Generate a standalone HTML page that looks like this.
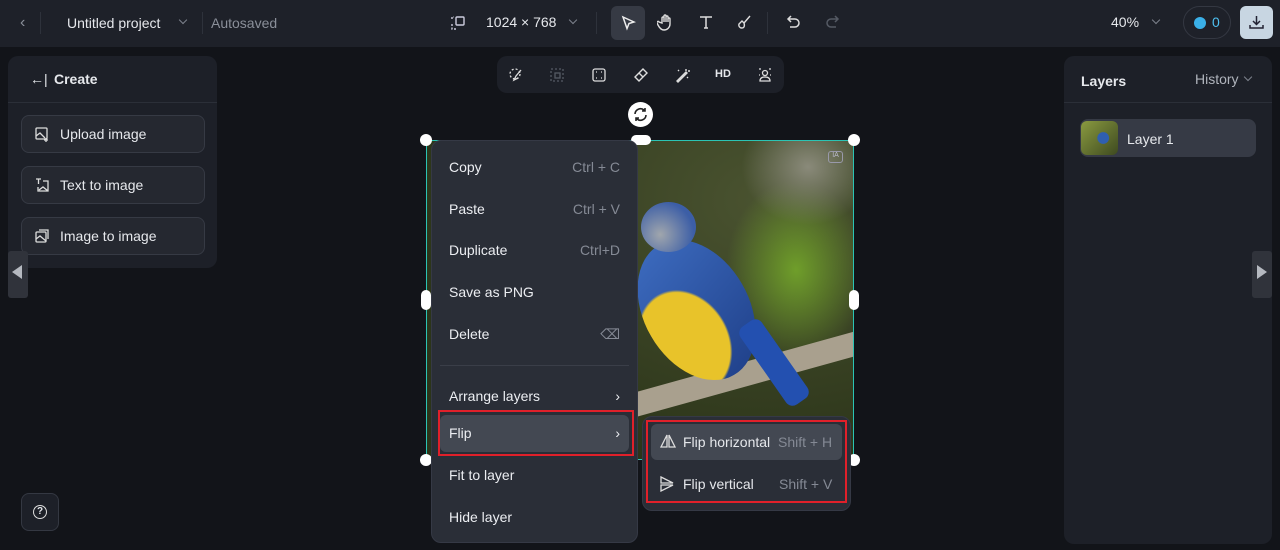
<!DOCTYPE html>
<html><head><meta charset="utf-8"><style>
*{box-sizing:border-box;margin:0;padding:0}
body{width:1280px;height:550px;background:#121419;font-family:"Liberation Sans",sans-serif;color:#e6e8ec;position:relative;overflow:hidden;font-size:14px}
.abs{position:absolute}
.top{left:0;top:0;width:1280px;height:47px;background:#1e2129}
.panel{background:#1d2028;border-radius:10px}
.btn{position:absolute;left:21px;width:184px;height:38px;border:1px solid #363a44;border-radius:8px;background:#252830;display:flex;align-items:center;padding-left:12px;gap:10px;font-size:14px}
.menu{left:431px;top:140px;width:207px;height:403px;background:#2a2e37;border-radius:10px;border:1px solid #353945}
.mi{position:absolute;left:17px;right:17px;font-size:14px;display:flex;justify-content:space-between;color:#eceef2}
.mi span.k{color:#858a95}
svg{display:block}
.chev{width:6px;height:6px;border-right:1.3px solid #7d828c;border-bottom:1.3px solid #7d828c;transform:rotate(45deg)}
</style></head><body>
<div class="abs top"></div>
<div class="abs" style="left:20px;top:14px;color:#8a8f99;font-size:16px">&#8249;</div>
<div class="abs" style="left:40px;top:12px;width:1px;height:22px;background:#2e323b"></div>
<div class="abs" style="left:67px;top:15px;font-size:14px">Untitled project</div>
<div class="abs chev" style="left:180px;top:17px"></div>
<div class="abs" style="left:202px;top:12px;width:1px;height:22px;background:#2e323b"></div>
<div class="abs" style="left:211px;top:15px;font-size:14px;color:#8a8f99">Autosaved</div>
<svg class="abs" style="left:450px;top:15px" width="16" height="16" fill="none" stroke="#ccd" stroke-width="1.4"><rect x="6" y="2" width="8" height="8" rx="1"/><path d="M2 4v-2h2M2 9v5h5" stroke-dasharray="2 1.5"/></svg>
<div class="abs" style="left:486px;top:14px;font-size:14px">1024 × 768</div>
<div class="abs chev" style="left:570px;top:17px"></div>
<div class="abs" style="left:596px;top:12px;width:1px;height:22px;background:#2e323b"></div>
<div class="abs" style="left:611px;top:6px;width:34px;height:34px;border-radius:6px;background:#363a44"></div>
<svg class="abs" style="left:620px;top:15px" width="16" height="16" fill="none" stroke="#eee" stroke-width="1.5"><path d="M3 2l11 5-5 1.5-2 5z"/></svg>
<svg class="abs" style="left:657px;top:13px" width="18" height="18" fill="none" stroke="#ddd" stroke-width="1.4"><path d="M5 10V5a1 1 0 012 0v4V3a1 1 0 012 0v6V4a1 1 0 012 0v5V6a1 1 0 012 0v5a6 6 0 01-6 6c-3 0-5-3-6-5l-1-2a1 1 0 012-1z"/></svg>
<svg class="abs" style="left:698px;top:14px" width="16" height="16" fill="none" stroke="#ddd" stroke-width="1.5"><path d="M2 3h12M8 3v11M6 14h4"/></svg>
<svg class="abs" style="left:736px;top:14px" width="16" height="16" fill="none" stroke="#ddd" stroke-width="1.4"><path d="M14 2L8 9M8 9l-2-2-3 3a3 3 0 003 4c2 0 3-2 2-5z"/></svg>
<div class="abs" style="left:767px;top:12px;width:1px;height:22px;background:#2e323b"></div>
<svg class="abs" style="left:786px;top:14px" width="16" height="16" fill="none" stroke="#ddd" stroke-width="1.5"><path d="M5 2L2 5l3 3M2 5h7a4 4 0 010 8H4"/></svg>
<svg class="abs" style="left:824px;top:14px" width="16" height="16" fill="none" stroke="#555a64" stroke-width="1.5"><path d="M11 2l3 3-3 3M14 5H7a4 4 0 000 8h5"/></svg>
<div class="abs" style="left:1111px;top:14px;font-size:14px">40%</div>
<div class="abs chev" style="left:1153px;top:17px"></div>
<div class="abs" style="left:1183px;top:6px;width:48px;height:33px;border-radius:17px;border:1px solid #343842"></div>
<div class="abs" style="left:1194px;top:17px;width:12px;height:12px;border-radius:50%;background:#3ab0e8"></div>
<div class="abs" style="left:1212px;top:14px;font-size:14px;color:#4ec0f0">0</div>
<div class="abs" style="left:1240px;top:6px;width:33px;height:33px;border-radius:6px;background:#c8d6e2"></div>
<svg class="abs" style="left:1248px;top:14px" width="17" height="17" fill="none" stroke="#223" stroke-width="1.5"><path d="M8.5 2v8M5 7l3.5 3.5L12 7M2 11v3h13v-3"/></svg>

<div class="abs panel" style="left:8px;top:56px;width:209px;height:212px"></div>
<div class="abs" style="left:8px;top:102px;width:209px;height:1px;background:#2b2f38"></div>
<div class="abs" style="left:30px;top:71px;font-size:14px">&#8592;|</div>
<div class="abs" style="left:54px;top:71px;font-size:14px;font-weight:bold">Create</div>
<div class="btn" style="top:115px"><svg width="16" height="16" fill="none" stroke="#ddd" stroke-width="1.3"><rect x="2" y="2" width="11" height="11" rx="1"/><path d="M2 10l4-3 5 5M12 12v4M10 14h4"/></svg>Upload image</div>
<div class="btn" style="top:166px"><svg width="16" height="16" fill="none" stroke="#ddd" stroke-width="1.3"><path d="M2 2h5M4.5 2v5M9 4h5v10H4v-4M5 13l4-3 5 4"/></svg>Text to image</div>
<div class="btn" style="top:217px"><svg width="16" height="16" fill="none" stroke="#ddd" stroke-width="1.3"><rect x="2" y="4" width="10" height="10" rx="1"/><path d="M5 2h9v9M2 11l4-3 6 5"/></svg>Image to image</div>
<div class="abs" style="left:8px;top:251px;width:20px;height:47px;background:#30333b;border-radius:3px"></div>
<div class="abs" style="left:12px;top:265px;width:0;height:0;border-top:7px solid transparent;border-bottom:7px solid transparent;border-right:10px solid #b5b9c0"></div>
<div class="abs" style="left:21px;top:493px;width:38px;height:38px;border-radius:8px;border:1px solid #343842;background:#1d2028"></div>
<div class="abs" style="left:33px;top:505px;width:14px;height:14px;border-radius:50%;border:1.5px solid #ddd;font-size:10px;text-align:center;line-height:11px;font-weight:bold">?</div>

<div class="abs panel" style="left:497px;top:56px;width:287px;height:37px"></div>
<svg class="abs" style="left:508px;top:67px" width="16" height="16" fill="none" stroke="#ddd" stroke-width="1.3"><circle cx="7" cy="7" r="5" stroke-dasharray="2 2"/><path d="M13 3l-5 6-2 4 4-2"/></svg>
<svg class="abs" style="left:549px;top:67px" width="16" height="16" fill="none" stroke="#555a64" stroke-width="1.3"><rect x="2" y="2" width="12" height="12" stroke-dasharray="2 2"/><rect x="6" y="6" width="5" height="5"/></svg>
<svg class="abs" style="left:591px;top:67px" width="16" height="16" fill="none" stroke="#ddd" stroke-width="1.3"><rect x="2" y="2" width="12" height="12" rx="2"/><path d="M5 5h1M10 5h1M5 11h1M10 11h1"/></svg>
<svg class="abs" style="left:633px;top:67px" width="16" height="16" fill="none" stroke="#ddd" stroke-width="1.4"><path d="M10 2l4 4-8 8-4-4zM6 6l4 4"/></svg>
<svg class="abs" style="left:675px;top:67px" width="16" height="16" fill="none" stroke="#ddd" stroke-width="1.4"><path d="M2 14l9-9 1 1-9 9zM11 2v2M13 4h2M3 3l1 1M12 10l1 1"/></svg>
<div class="abs" style="left:715px;top:68px;font-size:11px;font-weight:bold">HD</div>
<svg class="abs" style="left:757px;top:67px" width="16" height="16" fill="none" stroke="#ddd" stroke-width="1.3"><circle cx="8" cy="6" r="2.5"/><path d="M3 14c0-3 2-4 5-4s5 1 5 4zM2 2h2M12 2h2M2 8h1M13 8h1"/></svg>

<div class="abs" style="left:426px;top:140px;width:428px;height:320px;overflow:hidden;background:radial-gradient(ellipse 70px 90px at 370px 130px,#6f9e2a,transparent),radial-gradient(ellipse at 340px 60px,#4a5330,#2b3419 75%);">
 <div class="abs" style="left:310px;top:0;width:120px;height:90px;background:radial-gradient(ellipse at 60% 30%,#8a8a7a,transparent 65%)"></div>
 <div class="abs" style="left:170px;top:222px;width:300px;height:24px;background:#a9a08e;transform:rotate(-15.5deg);border-radius:12px"></div>
 <div class="abs" style="left:218px;top:95px;width:105px;height:150px;border-radius:50%;transform:rotate(-30deg);background:radial-gradient(ellipse at 25% 65%,#e8c32a 0 38%,transparent 40%),linear-gradient(160deg,#3d6cc0,#1f3f88)"></div>
 <div class="abs" style="left:215px;top:62px;width:55px;height:50px;border-radius:50%;background:radial-gradient(circle at 35% 65%,#a0a6ad,#3c5ea6 70%)"></div>
 <div class="abs" style="left:335px;top:175px;width:26px;height:95px;background:#2350b0;transform:rotate(-35deg);border-radius:8px"></div>
 <div class="abs" style="left:402px;top:11px;width:15px;height:12px;border:1px solid #99a;border-radius:3px;font-size:7px;color:#bbc;text-align:center">IA</div>
</div>
<div class="abs" style="left:426px;top:140px;width:428px;height:320px;border:1.5px solid #2bc4b4"></div>
<div class="abs" style="left:420px;top:134px;width:12px;height:12px;border-radius:50%;background:#fff"></div>
<div class="abs" style="left:848px;top:134px;width:12px;height:12px;border-radius:50%;background:#fff"></div>
<div class="abs" style="left:420px;top:454px;width:12px;height:12px;border-radius:50%;background:#fff"></div>
<div class="abs" style="left:848px;top:454px;width:12px;height:12px;border-radius:50%;background:#fff"></div>
<div class="abs" style="left:631px;top:135px;width:20px;height:10px;border-radius:5px;background:#fff"></div>
<div class="abs" style="left:421px;top:290px;width:10px;height:20px;border-radius:5px;background:#fff"></div>
<div class="abs" style="left:849px;top:290px;width:10px;height:20px;border-radius:5px;background:#fff"></div>
<div class="abs" style="left:628px;top:102px;width:25px;height:25px;border-radius:50%;background:#fff"></div>
<svg class="abs" style="left:632px;top:106px" width="17" height="17" fill="none" stroke="#222" stroke-width="1.6"><path d="M3 8a5.5 5.5 0 019-4l1 1M14 9a5.5 5.5 0 01-9 4l-1-1M13 2v3h-3M4 15v-3h3"/></svg>

<div class="abs menu">
 <div class="mi" style="top:18px"><span>Copy</span><span class="k">Ctrl + C</span></div>
 <div class="mi" style="top:60px"><span>Paste</span><span class="k">Ctrl + V</span></div>
 <div class="mi" style="top:101px"><span>Duplicate</span><span class="k">Ctrl+D</span></div>
 <div class="mi" style="top:143px"><span>Save as PNG</span></div>
 <div class="mi" style="top:185px"><span>Delete</span><span class="k">&#9003;</span></div>
 <div class="abs" style="left:8px;right:8px;top:224px;height:1px;background:#3a3e48"></div>
 <div class="mi" style="top:247px"><span>Arrange layers</span><span>&#8250;</span></div>
 <div class="abs" style="left:8px;right:8px;top:274px;height:37px;background:#434852;border-radius:6px"></div>
 <div class="mi" style="top:284px"><span>Flip</span><span>&#8250;</span></div>
 <div class="mi" style="top:326px"><span>Fit to layer</span></div>
 <div class="mi" style="top:368px"><span>Hide layer</span></div>
</div>
<div class="abs" style="left:438px;top:410px;width:196px;height:46px;border:2px solid #e0202a"></div>

<div class="abs" style="left:642px;top:416px;width:209px;height:95px;background:#2a2e37;border-radius:10px;border:1px solid #353945"></div>
<div class="abs" style="left:651px;top:424px;width:191px;height:36px;background:#434852;border-radius:6px"></div>
<svg class="abs" style="left:660px;top:434px" width="16" height="14" fill="none" stroke="#ddd" stroke-width="1.3"><path d="M7 1L1 13h6zM9 1l6 12H9z"/></svg>
<div class="abs" style="left:683px;top:434px;font-size:14px">Flip horizontal</div>
<div class="abs" style="left:778px;top:434px;font-size:14px;color:#858a95">Shift + H</div>
<svg class="abs" style="left:660px;top:476px" width="14" height="16" fill="none" stroke="#ddd" stroke-width="1.3"><path d="M1 1l12 6H1zM1 9h12L1 15z"/></svg>
<div class="abs" style="left:683px;top:476px;font-size:14px">Flip vertical</div>
<div class="abs" style="left:779px;top:476px;font-size:14px;color:#858a95">Shift + V</div>
<div class="abs" style="left:646px;top:420px;width:201px;height:83px;border:2px solid #e0202a"></div>

<div class="abs panel" style="left:1064px;top:56px;width:208px;height:488px"></div>
<div class="abs" style="left:1064px;top:102px;width:208px;height:1px;background:#2b2f38"></div>
<div class="abs" style="left:1081px;top:73px;font-size:14px;font-weight:bold">Layers</div>
<div class="abs" style="left:1195px;top:71px;font-size:14px;color:#b0b4bc">History</div>
<div class="abs chev" style="left:1245px;top:74px"></div>
<div class="abs" style="left:1080px;top:119px;width:176px;height:38px;background:#363a45;border-radius:8px"></div>
<div class="abs" style="left:1081px;top:121px;width:37px;height:34px;border-radius:6px;background:radial-gradient(circle at 60% 50%,#2f5fb0 0 20%,transparent 22%),linear-gradient(135deg,#8a9a40,#3e4a20)"></div>
<div class="abs" style="left:1127px;top:131px;font-size:14px">Layer 1</div>
<div class="abs" style="left:1252px;top:251px;width:20px;height:47px;background:#30333b;border-radius:3px"></div>
<div class="abs" style="left:1257px;top:265px;width:0;height:0;border-top:7px solid transparent;border-bottom:7px solid transparent;border-left:10px solid #b5b9c0"></div>
</body></html>
